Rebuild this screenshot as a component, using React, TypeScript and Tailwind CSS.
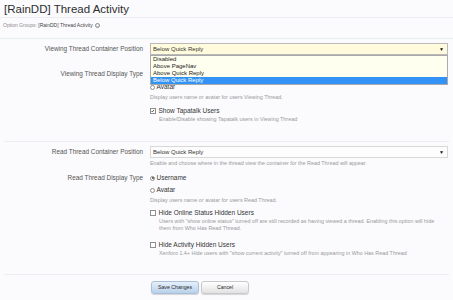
import React from 'react';

const Radio = ({ checked, label }: { checked?: boolean; label: string }) => (
  <div className="flex h-[10px] items-center gap-[1.5px]">
    <span className="flex h-[5px] w-[5px] items-center justify-center rounded-full border-[0.5px] border-[#8f8f8f] bg-white">
      {checked && <span className="h-[2px] w-[2px] rounded-full bg-[#444]" />}
    </span>
    <span className="text-[6.5px] text-[#333]">{label}</span>
  </div>
);

const Checkbox = ({ checked, label }: { checked?: boolean; label: string }) => (
  <div className="flex h-[10px] items-center gap-[3px]">
    <span className="flex h-[5.5px] w-[5.5px] items-center justify-center border-[0.5px] border-[#8f8f8f] bg-white">
      {checked && (
        <svg viewBox="0 0 10 10" className="h-[6px] w-[6px]">
          <path d="M1.5 5.2l2.4 2.6L8.6 1.8" fill="none" stroke="#222" strokeWidth={2} />
        </svg>
      )}
    </span>
    <span className="text-[6.5px] text-[#333]">{label}</span>
  </div>
);

const Desc = ({ children, indent }: { children: React.ReactNode; indent?: boolean }) => (
  <p className={`text-[5.4px] leading-[7px] text-[#9a9a9a] ${indent ? 'pl-[9px]' : ''}`}>{children}</p>
);

const Select = ({ value, focused }: { value: string; focused?: boolean }) => (
  <div
    className={`flex h-[12px] items-center justify-between border-[0.5px] px-[2px] ${
      focused ? 'border-[#b9b9b9] bg-[#fffbdc]' : 'border-[#d8d8d8] bg-[#fdfdfd]'
    }`}
  >
    <span className="text-[6px] text-[#333]">{value}</span>
    <span className="mr-[1px] text-[5px] leading-none text-[#111]">▼</span>
  </div>
);

const Row = ({ label, children, className = '' }: { label: string; children: React.ReactNode; className?: string }) => (
  <div className={`flex gap-[7px] ${className}`}>
    <div className="flex h-[12px] w-[139px] shrink-0 items-center justify-end">
      <span className="text-[6.4px] text-[#555]">{label}</span>
    </div>
    <div className="w-[298px]">{children}</div>
  </div>
);

export default function App() {
  return (
    <div className="relative h-[300px] overflow-hidden bg-[#fbfbfd] font-['Liberation_Sans',Arial,sans-serif]">
      <h1 className="h-[17px] px-[4px] pt-[2px] text-[11.5px] leading-[14px] text-[#2e2e2e]">[RainDD] Thread Activity</h1>

      <div className="h-[21px] border-t border-[#ebedf0] px-[3px] pt-[4px]">
        <div className="flex items-center gap-[2px] text-[5px] leading-[7px] text-[#8c8c8c]">
          <span>
            Option Groups: <span className="text-[#444]">[RainDD] Thread Activity</span>
          </span>
          <span className="flex h-[5px] w-[5px] items-center justify-center rounded-full border-[0.5px] border-[#888]">
            <svg viewBox="0 0 10 10" className="h-[4px] w-[4px]">
              <path d="M2.5 3.8L5 6.3l2.5-2.5" fill="none" stroke="#555" strokeWidth={1.5} />
            </svg>
          </span>
        </div>
      </div>

      <div className="border-t border-[#e6efec] px-[4px]">
        <Row label="Viewing Thread Container Position" className="mt-[4px]">
          <Select value="Below Quick Reply" focused />
        </Row>

        <Row label="Viewing Thread Display Type" className="mt-[13px]">
          <div className="mt-[1px]">
            <Radio checked label="Username" />
            <div className="mt-[3px]">
              <Radio label="Avatar" />
            </div>
            <div className="mt-[2px]">
              <Desc>Display users name or avatar for users Viewing Thread.</Desc>
            </div>
            <div className="mt-[5px]">
              <Checkbox checked label="Show Tapatalk Users" />
            </div>
            <Desc indent>Enable/Disable showing Tapatalk users in Viewing Thread</Desc>
          </div>
        </Row>

        <div className="mt-[18px] border-t border-[#ebedf0]" />

        <Row label="Read Thread Container Position" className="mt-[4px]">
          <Select value="Below Quick Reply" />
          <div className="mt-[2px]">
            <Desc>Enable and choose where in the thread view the container for the Read Thread will appear.</Desc>
          </div>
        </Row>

        <Row label="Read Thread Display Type" className="mt-[5px]">
          <div className="mt-[1px]">
            <Radio checked label="Username" />
            <div className="mt-[2px]">
              <Radio label="Avatar" />
            </div>
            <div className="mt-[2px]">
              <Desc>Display users name or avatar for users Read Thread.</Desc>
            </div>
            <div className="mt-[4px]">
              <Checkbox label="Hide Online Status Hidden Users" />
            </div>
            <Desc indent>
              Users with "show online status" turned off are still recorded as having viewed a thread. Enabling this option will hide
              <br />
              them from Who Has Read Thread.
            </Desc>
            <div className="mt-[8px]">
              <Checkbox label="Hide Activity Hidden Users" />
            </div>
            <Desc indent>Xenforo 1.4+ Hide users with "show current activity" turned off from appearing in Who Has Read Thread</Desc>
          </div>
        </Row>

        <div className="mt-[17px] border-t border-[#ebedf0]" />

        <div className="flex gap-[2px] pl-[147px] pt-[6px]">
          <button className="h-[13px] w-[48px] rounded-[3px] border-[0.5px] border-[#a7bfd8] bg-gradient-to-b from-[#e6f0fb] to-[#b9d0ea] text-[5.2px] text-[#2a2a2a] shadow-[0_1px_1px_rgba(0,0,0,0.15)]">
            Save Changes
          </button>
          <button className="h-[13px] w-[48px] rounded-[3px] border-[0.5px] border-[#c9c9c9] bg-gradient-to-b from-[#ffffff] to-[#e2e2e2] text-[5.2px] text-[#2a2a2a] shadow-[0_1px_1px_rgba(0,0,0,0.15)]">
            Cancel
          </button>
        </div>
      </div>

      <div className="absolute left-[150px] top-[55px] w-[298px] border-[0.5px] border-[#a9a9a9] bg-[#fffff0] text-[6px] text-[#222]">
        <div className="h-[7px] px-[2px] leading-[7px]">Disabled</div>
        <div className="h-[7px] px-[2px] leading-[7px]">Above PageNav</div>
        <div className="h-[7px] px-[2px] leading-[7px]">Above Quick Reply</div>
        <div className="h-[7px] bg-[#3392f5] px-[2px] leading-[7px] text-white">Below Quick Reply</div>
      </div>
    </div>
  );
}
